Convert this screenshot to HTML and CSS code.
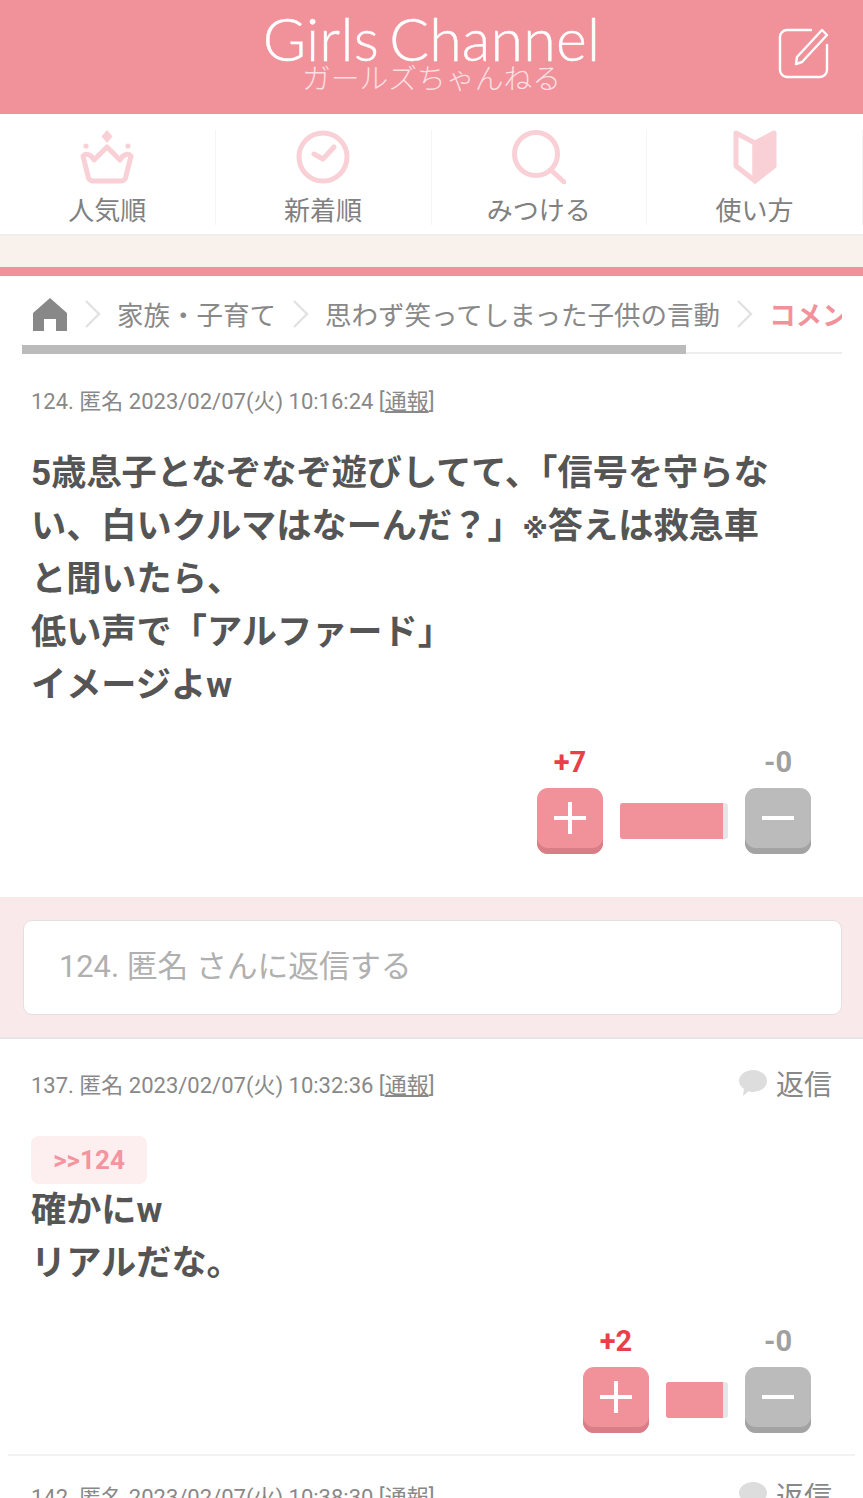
FILE: index.html
```html
<!DOCTYPE html>
<html lang="ja">
<head>
    <meta charset="UTF-8">
    <meta name="viewport" content="width=device-width, initial-scale=1.0">
    <title>思わず笑ってしまった子供の言動</title>
    <link rel="stylesheet" href="styles.css">
</head>
<body>
    <header class="site-header">
        <a class="logo" href="#">
            <span class="logo-en">Girls Channel</span>
            <span class="logo-ja">ガールズちゃんねる</span>
        </a>
        <a class="post-link" href="#" aria-label="投稿">
            <svg width="52" height="52" viewBox="0 0 52 52" fill="none" stroke="#fff" stroke-width="2.4" stroke-linejoin="round" stroke-linecap="round">
                <path d="M33 3H9a7 7 0 0 0-7 7v33a7 7 0 0 0 7 7h33a7 7 0 0 0 7-7V18"/>
                <path d="M19 30L44 3l5 5-25 27-6 2z"/>
            </svg>
        </a>
    </header>

    <nav class="main-nav">
        <a class="nav-item" href="#">
            <svg width="54" height="54" viewBox="0 0 54 54" fill="none" stroke="#f8d0d6" stroke-width="5" stroke-linejoin="round" stroke-linecap="round">
                <path d="M27 0l5.500 6.500-5.500 6.500-5.500-6.500z" fill="#f8d0d6" stroke="none"/>
                <circle cx="6" cy="16" r="2.600" fill="#f8d0d6" stroke="none"/>
                <circle cx="48" cy="16" r="2.600" fill="#f8d0d6" stroke="none"/>
                <path d="M3 26c3-3 8-2 11 4l13-13 13 13c3-6 8-7 11-4l-5 20a5 5 0 0 1-5 5H13a5 5 0 0 1-5-5z"/>
            </svg>
            <span>人気順</span>
        </a>
        <a class="nav-item" href="#">
            <svg width="54" height="54" viewBox="0 0 54 54" fill="none" stroke="#f8d0d6" stroke-linejoin="round" stroke-linecap="round">
                <circle cx="27" cy="27" r="24" stroke-width="5"/>
                <path d="M18 24l9 5 11-12" stroke-width="5"/>
            </svg>
            <span>新着順</span>
        </a>
        <a class="nav-item" href="#">
            <svg width="54" height="54" viewBox="0 0 54 54" fill="none" stroke="#f8d0d6" stroke-width="5" stroke-linecap="round">
                <circle cx="24" cy="24" r="21.500"/>
                <path d="M39 40l13 12"/>
            </svg>
            <span>みつける</span>
        </a>
        <a class="nav-item" href="#">
            <svg width="54" height="54" viewBox="0 0 54 54" stroke="#f8d0d6" stroke-width="5" stroke-linejoin="round">
                <path d="M27 13L8 3v33l19 15z" fill="none"/>
                <path d="M27 13L46 3v33L27 51z" fill="#f8d0d6"/>
            </svg>
            <span>使い方</span>
        </a>
    </nav>

    <div class="notice-band"></div>

    <div class="breadcrumb-wrap">
        <div class="breadcrumb">
            <svg class="home-icon" width="36" height="34" viewBox="0 0 36 34">
                <path d="M18 1L35 16v18H24V22H12v12H1V16z" fill="#888"/>
            </svg>
            <svg class="crumb-arrow" width="18" height="30" viewBox="0 0 18 30" fill="none" stroke="#e2e2e2" stroke-width="2.400"><path d="M2 2l13 13L2 28"/></svg>
            <a href="#">家族・子育て</a>
            <svg class="crumb-arrow" width="18" height="30" viewBox="0 0 18 30" fill="none" stroke="#e2e2e2" stroke-width="2.400"><path d="M2 2l13 13L2 28"/></svg>
            <a href="#">思わず笑ってしまった子供の言動</a>
            <svg class="crumb-arrow" width="18" height="30" viewBox="0 0 18 30" fill="none" stroke="#e2e2e2" stroke-width="2.400"><path d="M2 2l13 13L2 28"/></svg>
            <span class="crumb-current">コメント</span>
        </div>
        <div class="crumb-scroll"><div class="crumb-thumb"></div></div>
    </div>

    <article class="comment first">
        <div class="comment-meta">
            <p class="meta-text">124. 匿名 2023/02/07(火) 10:16:24 <a href="#">[<u>通報</u>]</a></p>
        </div>
        <div class="comment-body">5歳息子となぞなぞ遊びしてて、「信号を守らない、白いクルマはなーんだ？」<span class="note-mark">※</span>答えは救急車<br>と聞いたら、<br>低い声で「アルファード」<br>イメージよw</div>
        <div class="vote">
            <div class="vote-col">
                <span class="count plus">+7</span>
                <button class="vote-btn plus"><i class="bar-h"></i><i class="bar-v"></i></button>
            </div>
            <div class="vote-bar" style="width: 108px"><div class="vote-fill"></div></div>
            <div class="vote-col">
                <span class="count minus">-0</span>
                <button class="vote-btn minus"><i class="bar-h"></i></button>
            </div>
        </div>
    </article>

    <div class="reply-area">
        <div class="reply-input">124. 匿名 さんに返信する</div>
    </div>

    <article class="comment second">
        <div class="comment-meta">
            <p class="meta-text">137. 匿名 2023/02/07(火) 10:32:36 <a href="#">[<u>通報</u>]</a></p>
            <a class="reply-link" href="#">
                <svg width="30" height="28" viewBox="0 0 30 28"><path d="M15 1c8 0 14 5 14 11s-6 11-14 11c-2 0-3 0-4-1l-6 5 1-7C3 18 1 15 1 12 1 6 7 1 15 1z" fill="#ddd"/></svg>
                返信
            </a>
        </div>
        <a class="anchor" href="#">&gt;&gt;124</a>
        <div class="comment-body">確かにw<br>リアルだな。</div>
        <div class="vote">
            <div class="vote-col">
                <span class="count plus">+2</span>
                <button class="vote-btn plus"><i class="bar-h"></i><i class="bar-v"></i></button>
            </div>
            <div class="vote-bar" style="width: 62px"><div class="vote-fill"></div></div>
            <div class="vote-col">
                <span class="count minus">-0</span>
                <button class="vote-btn minus"><i class="bar-h"></i></button>
            </div>
        </div>
    </article>

    <article class="comment third">
        <div class="comment-meta">
            <p class="meta-text">142. 匿名 2023/02/07(火) 10:38:30 <a href="#">[<u>通報</u>]</a></p>
            <a class="reply-link" href="#">
                <svg width="30" height="28" viewBox="0 0 30 28"><path d="M15 1c8 0 14 5 14 11s-6 11-14 11c-2 0-3 0-4-1l-6 5 1-7C3 18 1 15 1 12 1 6 7 1 15 1z" fill="#ddd"/></svg>
                返信
            </a>
        </div>
    </article>
</body>
</html>
```

FILE: styles.css
```css
* {
    box-sizing: border-box;
}

html,
body {
    height: 100%;
}

body {
    margin: 0;
    background-color: #fff;
    color: #555;
    font-family: Roboto, "Noto Sans CJK JP", sans-serif;
    overflow: hidden;
}

a {
    color: inherit;
    text-decoration: none;
}

.site-header {
    position: relative;
    height: 114px;
    background-color: #f1929b;
    display: flex;
    justify-content: center;
}

.logo {
    display: flex;
    flex-direction: column;
    align-items: center;
    color: #fff;
    padding-top: 11px;
}

.logo-en {
    font-family: Lato, sans-serif;
    font-weight: 300;
    font-size: 59px;
    line-height: 56px;
    letter-spacing: 0.2px;
    word-spacing: -6px;
    -webkit-text-stroke: 0.4px #fff;
}

.logo-ja {
    font-family: "Noto Sans CJK JP", sans-serif;
    font-weight: 300;
    font-size: 28.8px;
    line-height: 20px;
    color: #fbdfe2;
}

.post-link {
    position: absolute;
    top: 27px;
    right: 33px;
}

.post-link svg {
    display: block;
}

.main-nav {
    height: 122px;
    display: flex;
    padding-top: 16px;
    background-color: #fff;
    border-bottom: 2px solid #f2efea;
}

.nav-item {
    width: 216px;
    height: 95px;
    display: flex;
    flex-direction: column;
    align-items: center;
    border-right: 1px solid #f4f4f4;
    color: #808080;
    font-size: 26px;
    line-height: 31px;
}

.nav-item svg {
    display: block;
    flex-shrink: 0;
    margin-bottom: 12px;
}

.notice-band {
    height: 31px;
    background-color: #f9f2ec;
}

.breadcrumb-wrap {
    border-top: 9px solid #f1929b;
    padding: 0 21px 0 22px;
    height: 87px;
}

.breadcrumb {
    height: 69px;
    display: flex;
    align-items: center;
    padding: 6px 0 0 10px;
    overflow: hidden;
    white-space: nowrap;
    color: #888;
    font-size: 26.5px;
}

.home-icon,
.crumb-arrow {
    flex-shrink: 0;
}

.crumb-arrow {
    margin: 0 15.5px;
}

.crumb-current {
    color: #f1929b;
    font-weight: 700;
}

.crumb-scroll {
    height: 9px;
    border-bottom: 2px solid #eee;
}

.crumb-thumb {
    width: 664px;
    height: 9px;
    background-color: #bbb;
}

.comment {
    padding: 0 31px;
}

.comment.first {
    padding-top: 27px;
    height: 543px;
}

.comment.second {
    padding: 26px 23px 0;
    height: 417px;
    margin: 0 8px;
    border-bottom: 2px solid #f2f2f2;
}

.comment.third {
    padding-top: 21px;
}

.comment-meta {
    display: flex;
    justify-content: space-between;
    align-items: center;
    height: 36px;
}

.meta-text {
    margin: 0;
    font-size: 22px;
    color: #888;
    white-space: nowrap;
}

.reply-link {
    display: flex;
    align-items: center;
    gap: 8px;
    font-size: 28px;
    color: #888;
}

.comment-body {
    margin-top: 30px;
    font-size: 35.2px;
    line-height: 53px;
    font-weight: 700;
    color: #555;
    width: 750px;
}

.note-mark {
    font-family: "DejaVu Sans", sans-serif;
    font-size: 26px;
    line-height: 0;
}

.anchor {
    display: block;
    width: 116px;
    height: 48px;
    margin-top: 35px;
    border-radius: 8px;
    background-color: #fdeef0;
    color: #f5949e;
    font-size: 26px;
    font-weight: 700;
    line-height: 48px;
    text-align: center;
}

.second .comment-body {
    margin-top: 0;
}

.vote {
    display: flex;
    justify-content: flex-end;
    align-items: flex-end;
    gap: 17px;
    margin-top: 31px;
    padding-right: 21px;
}

.second .vote {
    margin-top: 32px;
}

.vote-col {
    width: 66px;
    display: flex;
    flex-direction: column;
    align-items: center;
}

.count {
    font-size: 29px;
    line-height: 38px;
    font-weight: 700;
    margin-bottom: 7px;
}

.count.plus {
    color: #ea3f4a;
}

.count.minus {
    color: #a0a0a0;
}

.vote-btn {
    position: relative;
    display: block;
    width: 66px;
    height: 66px;
    padding: 0;
    border: none;
    border-radius: 11px;
}

.vote-btn.plus {
    background-color: #f1929b;
    box-shadow: inset 0 -6px 0 #d97d86;
}

.vote-btn.minus {
    background-color: #bbb;
    box-shadow: inset 0 -6px 0 #a3a3a3;
}

.bar-h,
.bar-v {
    position: absolute;
    background-color: #fff;
}

.bar-h {
    left: 17px;
    top: 28px;
    width: 32px;
    height: 4px;
}

.bar-v {
    left: 31px;
    top: 14px;
    width: 4px;
    height: 32px;
}

.vote-bar {
    height: 36px;
    margin-bottom: 15px;
    background-color: #e6e6e6;
    border-radius: 3px;
    overflow: hidden;
}

.vote-fill {
    width: calc(100% - 5px);
    height: 100%;
    background-color: #f1929b;
}

.reply-area {
    height: 142px;
    padding: 23px 21px 0 23px;
    background-color: #f9e9ea;
    border-bottom: 2px solid #e6e6e6;
}

.reply-input {
    height: 95px;
    padding: 0 35px 8px;
    display: flex;
    align-items: center;
    background-color: #fff;
    border: 1px solid #e3e0e0;
    border-radius: 9px;
    color: #b0b0b0;
    font-size: 30.8px;
}
```
